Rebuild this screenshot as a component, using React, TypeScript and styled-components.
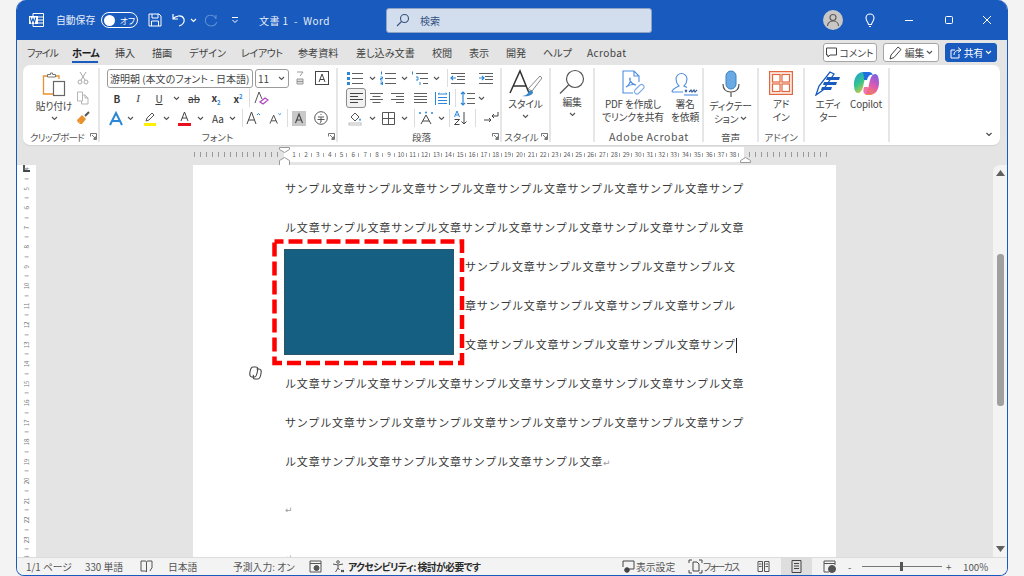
import React from "react";
import styled, { createGlobalStyle } from "styled-components";

const GlobalStyle = createGlobalStyle`
  html, body {
    margin: 0;
    height: 100%;
    overflow: hidden;
    background: #f3f3f3;
  }
  body {
    font-family: "Noto Sans CJK JP", "Noto Sans", "Liberation Sans", sans-serif;
    font-feature-settings: "palt";
  }
  * { box-sizing: border-box; }
`;

const GRAY = "#5f5f5f";
const BLUE = "#2b88d8";

const Page = styled.div`
  width: 1024px;
  height: 576px;
  display: flex;
  justify-content: center;
`;
const Win = styled.div`
  width: 992px;
  height: 576px;
  display: flex;
  flex-direction: column;
  background: #e4e4e4;
  border: 1px solid #185abd;
  border-top: 0;
  border-radius: 10px 10px 8px 8px;
  overflow: hidden;
`;

/* title bar */
const TitleBar = styled.div`
  height: 40px;
  flex-shrink: 0;
  display: flex;
  align-items: center;
  background: #185abd;
  color: #fff;
`;
const Slot = styled.div<{ $w: number; $ml?: number }>`
  width: ${(p) => p.$w}px;
  margin-left: ${(p) => p.$ml ?? 0}px;
  flex-shrink: 0;
  display: flex;
  align-items: center;
  justify-content: center;
  white-space: nowrap;
`;
const TitleText = styled(Slot)`
  font-size: 9.8px;
  color: #e6edf8;
  justify-content: flex-start;
`;
const DocTitle = styled(TitleText)`
  font-size: 10px;
  letter-spacing: 0.45px;
`;
const Toggle = styled.div`
  width: 37px;
  height: 16px;
  margin-left: 6px;
  border: 1px solid #fff;
  border-radius: 8px;
  display: flex;
  align-items: center;
  padding-left: 2px;
  font-size: 8.5px;
  white-space: nowrap;
  flex-shrink: 0;
  &::before {
    content: "";
    width: 11px;
    height: 11px;
    border-radius: 50%;
    background: #fff;
    margin-right: 5px;
    flex-shrink: 0;
  }
`;
const SearchBox = styled.div`
  width: 266px;
  height: 25px;
  margin-left: 56px;
  flex-shrink: 0;
  display: flex;
  align-items: center;
  gap: 10px;
  padding-left: 9px;
  background: #d2ddee;
  border: 1px solid #8fa3c4;
  border-radius: 3px;
  color: #33527f;
  font-size: 10px;
`;
const Avatar = styled.div`
  width: 20px;
  height: 20px;
  margin-left: 171px;
  border-radius: 50%;
  background: #c9c7c5;
  display: flex;
  align-items: center;
  justify-content: center;
  flex-shrink: 0;
`;

/* tabs */
const TabRow = styled.div`
  height: 25px;
  flex-shrink: 0;
  display: flex;
  align-items: center;
  padding: 0 10px;
  gap: 17px;
`;
const Tab = styled.div<{ $on?: boolean; $w: number; $ls: number }>`
  position: relative;
  width: ${(p) => p.$w}px;
  flex-shrink: 0;
  font-size: 10.1px;
  line-height: 14px;
  letter-spacing: ${(p) => p.$ls}px;
  white-space: nowrap;
  color: ${(p) => (p.$on ? "#1d1d1d" : "#424242")};
  font-weight: ${(p) => (p.$on ? 700 : 400)};
  &::after {
    content: "";
    display: ${(p) => (p.$on ? "block" : "none")};
    position: absolute;
    left: 0;
    right: 0;
    bottom: -3px;
    height: 2px;
    background: #185abd;
  }
`;
const TabActions = styled.div`
  margin-left: auto;
  display: flex;
  gap: 6px;
`;
const ActionButton = styled.div<{ $w: number; $primary?: boolean }>`
  width: ${(p) => p.$w}px;
  height: 19px;
  display: flex;
  align-items: center;
  justify-content: center;
  gap: 2px;
  font-size: 9.8px;
  border-radius: 3px;
  white-space: nowrap;
  background: ${(p) => (p.$primary ? "#185abd" : "#fff")};
  color: ${(p) => (p.$primary ? "#fff" : "#444")};
  border: 1px solid ${(p) => (p.$primary ? "#185abd" : "#a5a5a5")};
`;

/* ribbon */
const Ribbon = styled.div`
  height: 80px;
  width: 977px;
  margin-left: 6px;
  flex-shrink: 0;
  display: flex;
  padding: 3px 0 0 1px;
  background: #fff;
  border-radius: 7px;
  box-shadow: 0 1px 1px #d2d2d2;
`;
const Group = styled.div<{ $w: number; $pl?: number }>`
  width: ${(p) => p.$w}px;
  height: 74px;
  flex-shrink: 0;
  display: flex;
  flex-direction: column;
  border-right: 2px solid #e6e6e6;
  padding-left: ${(p) => p.$pl ?? 0}px;
`;
const GroupBody = styled.div`
  height: 63px;
  flex-shrink: 0;
  display: flex;
`;
const GroupFoot = styled.div<{ $pl?: number }>`
  height: 12px;
  flex-shrink: 0;
  display: flex;
  align-items: center;
  padding-left: ${(p) => p.$pl ?? 0}px;
`;
const GroupLabel = styled.div<{ $ls?: number }>`
  flex: 1;
  text-align: center;
  font-size: 9.6px;
  line-height: 12px;
  letter-spacing: ${(p) => p.$ls ?? 0}px;
  color: #555;
  white-space: nowrap;
`;
const LatinLabel = styled(GroupLabel)`
  font-size: 10.6px;
  letter-spacing: 0.55px;
`;
const Stack = styled.div`
  display: flex;
  flex-direction: column;
`;
const ToolRow = styled.div`
  height: 20px;
  display: flex;
  align-items: center;
`;
const Tool = styled(Slot)`
  height: 20px;
  font-size: 10px;
  color: #3a3a3a;
`;
const Selected = styled(Tool)`
  background: #f1f1f1;
  border: 1.5px solid #8b8b8b;
  border-radius: 3px;
`;
const Divider = styled.div<{ $ml?: number }>`
  width: 1px;
  height: 18px;
  margin-left: ${(p) => p.$ml ?? 0}px;
  margin-right: 1px;
  background: #dcdcdc;
  flex-shrink: 0;
`;
const FontBox = styled.div<{ $w: number; $ml?: number }>`
  width: ${(p) => p.$w}px;
  height: 19px;
  margin-left: ${(p) => p.$ml ?? 0}px;
  flex-shrink: 0;
  display: flex;
  align-items: center;
  justify-content: space-between;
  padding: 0 3px 0 2px;
  border: 1px solid #9b9b9b;
  border-radius: 3px;
  font-size: 10px;
  color: #444;
  white-space: nowrap;
`;
const SubBlue = styled.sub`
  color: ${BLUE};
  font-size: 6px;
`;
const SupBlue = styled.sup`
  color: ${BLUE};
  font-size: 6px;
`;
const SerifI = styled.i`
  font-family: "Liberation Serif", serif;
  font-size: 11px;
`;
const BigTool = styled.div<{ $w: number; $ml?: number }>`
  width: ${(p) => p.$w}px;
  margin-left: ${(p) => p.$ml ?? 0}px;
  flex-shrink: 0;
  display: flex;
  flex-direction: column;
  align-items: center;
`;
const BigIcon = styled.div<{ $h?: number }>`
  height: ${(p) => p.$h ?? 30}px;
  display: flex;
  align-items: center;
  justify-content: center;
`;
const BigText = styled.div`
  font-size: 9.8px;
  line-height: 12.5px;
  letter-spacing: -0.2px;
  color: #444;
  white-space: nowrap;
  display: flex;
  align-items: center;
  justify-content: center;
  gap: 2px;
  min-height: 12.5px;
`;
const Collapse = styled.div`
  margin-left: auto;
  align-self: flex-end;
  width: 22px;
  height: 20px;
  display: flex;
  align-items: center;
  justify-content: center;
  margin-bottom: 1px;
`;

/* rulers */
const RulerRow = styled.div`
  position: relative;
  height: 18px;
  margin-top: 2px;
  flex-shrink: 0;
  display: flex;
  align-items: flex-start;
`;
const RulerCorner = styled.div`
  width: 177px;
  height: 18px;
  padding: 6px 0 0 6px;
  flex-shrink: 0;
`;
const TickGroup = styled.div<{ $ml?: number }>`
  display: flex;
  margin-left: ${(p) => p.$ml ?? 0}px;
  height: 15px;
  align-items: center;
  flex-shrink: 0;
`;
const Tick = styled.div`
  width: 5.95px;
  &::before {
    content: "";
    display: block;
    width: 1px;
    height: 5px;
    background: #9a9a9a;
  }
`;
const RulerStrip = styled.div`
  width: 460px;
  height: 15px;
  margin-left: 1px;
  padding-left: 4px;
  background: #fff;
  display: flex;
  align-items: center;
  flex-shrink: 0;
`;
const RulerCell = styled.div`
  position: relative;
  width: 11.87px;
  flex-shrink: 0;
  text-align: center;
  font-size: 6.4px;
  line-height: 8px;
  color: #5a5a5a;
  letter-spacing: -0.2px;
  &::after {
    content: "";
    position: absolute;
    right: 0;
    top: 2px;
    width: 1px;
    height: 4px;
    background: #a5a5a5;
  }
`;
const Marker = styled.svg<{ $x: number; $y: number }>`
  position: absolute;
  left: ${(p) => p.$x}px;
  top: ${(p) => p.$y}px;
`;

/* document area */
const DocRow = styled.div`
  flex: 1;
  min-height: 0;
  display: flex;
  overflow: hidden;
`;
const VRuler = styled.div`
  width: 19px;
  flex-shrink: 0;
  background: #fff;
  overflow: hidden;
`;
const VCell = styled.div`
  height: 9.75px;
  display: flex;
  align-items: center;
  justify-content: center;
  font-size: 6.2px;
  line-height: 8px;
  color: #7a7a7a;
  transform: translateY(-1px) rotate(-90deg);
`;
const VTick = styled.div`
  width: 1px;
  height: 4px;
  background: #a0a0a0;
`;
const Canvas = styled.div`
  flex: 1;
  display: flex;
  padding-left: 157px;
  overflow: hidden;
`;
const Sheet = styled.div`
  position: relative;
  width: 643px;
  flex-shrink: 0;
  background: #fff;
  padding: 3.5px 0 0 92px;
`;
const TextLine = styled.div`
  height: 39px;
  line-height: 39px;
  font-size: 11px;
  letter-spacing: 0.83px;
  font-feature-settings: normal;
  color: #3b3b3b;
  white-space: nowrap;
`;
const EmptyPara = styled.div`
  height: 48.5px;
  line-height: 48.5px;
  font-size: 9px;
  color: #9a9a9a;
`;
const FirstEmptyPara = styled(EmptyPara)`
  margin-top: 5px;
`;
const Mark = styled.span`
  font-size: 9px;
  color: #9a9a9a;
  letter-spacing: 0;
  font-family: "DejaVu Sans", sans-serif;
`;
const Caret = styled.span`
  display: inline-block;
  width: 1px;
  height: 15px;
  background: #222;
  vertical-align: middle;
`;
const WrapRow = styled.div`
  display: flex;
`;
const ShapeSlot = styled.div`
  width: 180px;
  flex-shrink: 0;
  padding-top: 2px;
`;
const Shape = styled.div`
  width: 170px;
  height: 106px;
  margin-left: -1px;
  background: #156082;
  border: 1px solid #2e5566;
`;
const Annotation = styled.svg`
  position: absolute;
  left: 79px;
  top: 74px;
`;
const CopilotHint = styled.svg`
  position: absolute;
  left: 56px;
  top: 201px;
`;
const ScrollBar = styled.div`
  width: 14px;
  flex-shrink: 0;
  display: flex;
  flex-direction: column;
  align-items: center;
  background: #f3f3f3;
  border-radius: 7px 0 0 0;
  padding-top: 5px;
  padding-bottom: 5px;
`;
const ScrollThumb = styled.div`
  width: 7px;
  height: 152px;
  margin-top: 78px;
  background: #a0a0a0;
  border-radius: 3px;
`;
const ScrollDown = styled.div`
  margin-top: auto;
  display: flex;
`;

/* status bar */
const StatusBar = styled.div`
  height: 18px;
  flex-shrink: 0;
  display: flex;
  align-items: center;
  background: #f3f3f3;
  border-top: 1px solid #dcdcdc;
  font-size: 9.8px;
  color: #555;
`;
const StatusText = styled(Slot)<{ $strong?: boolean; $ls?: number }>`
  justify-content: flex-start;
  color: ${(p) => (p.$strong ? "#2a2a2a" : "#555")};
  font-weight: ${(p) => (p.$strong ? 700 : 400)};
  letter-spacing: ${(p) => p.$ls ?? 0}px;
  height: 17px;
`;
const StatusIcon = styled(Slot)<{ $on?: boolean }>`
  height: 17px;
  background: ${(p) => (p.$on ? "#dedede" : "transparent")};
`;
const Zoom = styled.div`
  position: relative;
  width: 80px;
  height: 1px;
  margin-left: 8px;
  background: #777;
  flex-shrink: 0;
  &::after {
    content: "";
    position: absolute;
    left: 38px;
    top: -4px;
    width: 3px;
    height: 9px;
    background: #555;
  }
`;

/* icons */
type IcProps = { s?: number; h?: number; children: React.ReactNode; stroke?: string };
const Ic = ({ s = 16, h, children, stroke = GRAY }: IcProps) => (
  <svg width={s} height={h ?? s} viewBox={`0 0 ${s} ${h ?? s}`} fill="none" stroke={stroke} strokeWidth="1">
    {children}
  </svg>
);
const Chev = ({ c = "#555", s = 7 }: { c?: string; s?: number }) => (
  <svg width={s} height="5" viewBox="0 0 7 5" fill="none" stroke={c} strokeWidth="1.1">
    <path d="M1 1l2.5 2.5L6 1" />
  </svg>
);
const LauncherSvg = styled.svg`
  flex-shrink: 0;
`;
const Launcher = () => (
  <LauncherSvg width="8" height="8" viewBox="0 0 8 8" fill="none" stroke="#666" strokeWidth="0.9">
    <path d="M.5 3.5v-3h6v6h-3M2 2l3.5 3.5M5.5 3.5v2h-2" />
  </LauncherSvg>
);
const Bullets = () => (
  <Ic s={18} h={14}>
    <g fill={BLUE} stroke="none">
      <rect x="1" y="1" width="3" height="3" />
      <rect x="1" y="6" width="3" height="3" />
      <rect x="1" y="11" width="3" height="3" />
    </g>
    <path d="M6 2.5h11M6 7.5h11M6 12.5h11" />
  </Ic>
);
const Numbered = () => (
  <Ic s={18} h={14}>
    <path d="M2.5 0.5v3M1.5 6h2v1.5h-2V9h2M1.5 11h2v3h-2M1.5 12.5h2" stroke={BLUE} />
    <path d="M6 2.5h11M6 7.5h11M6 12.5h11" />
  </Ic>
);
const Multi = () => (
  <Ic s={18} h={14}>
    <path d="M1.5 .5v3M5 6h2v3H5M9 11h0v3" stroke={BLUE} />
    <path d="M5 2.5h12M9 7.5h8M12 12.5h5" />
  </Ic>
);
const IndentIc = ({ inc }: { inc?: boolean }) => (
  <Ic s={16} h={13}>
    <path d="M1 1.5h14M7 4.5h8M7 7.5h8M1 11.5h14" />
    <path d={inc ? "M1 6h5M4 4l2 2-2 2" : "M6 6H1M3 4L1 6l2 2"} stroke={BLUE} strokeWidth="1.2" />
  </Ic>
);
const Align = ({ mode }: { mode: "l" | "c" | "r" | "j" }) => {
  const long = 13;
  const short = mode === "j" ? 13 : 8;
  const x = mode === "c" ? 3.5 : mode === "r" ? 6 : 1;
  return (
    <Ic s={15} h={13}>
      <path d={`M1 1.5h${long}M${x} 4.5h${short}M1 7.5h${long}M${x} 10.5h${short}`} stroke={mode === "l" ? "#444" : GRAY} />
    </Ic>
  );
};

const WordLogo = () => (
  <svg width="17" height="16" viewBox="0 0 17 16" fill="none" stroke="#fff">
    <path d="M5 1.5h10.5v13H5z" />
    <path d="M10 5h5M10 8h5M10 11h5" />
    <rect x="1" y="4" width="9" height="8" fill="#fff" stroke="none" />
    <path d="M2.3 5.5l1.2 5 1.5-4 1.5 4 1.2-5" stroke="#185abd" strokeWidth="1.1" />
  </svg>
);
const Save = () => (
  <Ic s={14} stroke="#fff">
    <path d="M1 1h10l2 2v10H1zM4 1v4h6V1M3.5 13V8h7v5" />
  </Ic>
);
const Undo = ({ c = "#fff" }: { c?: string }) => (
  <svg width="16" height="16" viewBox="0 0 16 16" fill="none" stroke={c} strokeWidth="1.2">
    <path d="M2 2v5h5M2 7c2-3 9-5 11 0 1 4-2 6-5 7" />
  </svg>
);
const Redo = () => (
  <svg width="16" height="16" viewBox="0 0 16 16" fill="none" stroke="#5e8ed4" strokeWidth="1.1">
    <path d="M13 3v4M13 7C11 2 4 2 2.5 7c-1 4 2 7 6 7 3 0 5-2 5-4" />
  </svg>
);
const Customize = () => (
  <svg width="8" height="8" viewBox="0 0 8 8" fill="none" stroke="#fff">
    <path d="M1 1.5h6M1.5 4L4 6.5 6.5 4" />
  </svg>
);
const SearchIc = () => (
  <svg width="14" height="14" viewBox="0 0 14 14" fill="none" stroke="#33527f" strokeWidth="1.1">
    <circle cx="8.5" cy="5.5" r="4" />
    <path d="M5.5 8.5L1 13" />
  </svg>
);
const Bulb = () => (
  <svg width="16" height="16" viewBox="0 0 16 16" fill="none" stroke="#fff" strokeWidth="1.1">
    <path d="M6.5 12.5c0-2-2.5-3.5-2.5-6.5a4 4 0 0 1 8 0c0 3-2.5 4.5-2.5 6.5zM7 14.5h2" />
  </svg>
);
const Person = () => (
  <svg width="14" height="14" viewBox="0 0 14 14" fill="none" stroke="#5a5a5a" strokeWidth="1.1">
    <circle cx="7" cy="4.5" r="3" />
    <path d="M1.5 13c0-3 2.5-5 5.5-5s5.5 2 5.5 5" />
  </svg>
);
const Paste = () => (
  <svg width="24" height="25" viewBox="0 0 24 25" fill="none">
    <path d="M5 4H1.5v18H11" stroke="#e8912d" strokeWidth="1.3" />
    <path d="M14 4h3v3" stroke="#e8912d" strokeWidth="1.3" />
    <path d="M5.5 5V2.5h3V1h2v1.5h3V5z" stroke="#777" fill="#fff" />
    <rect x="11.5" y="9.5" width="11" height="14" stroke="#666" fill="#fff" strokeWidth="1.2" />
  </svg>
);
const Cut = () => (
  <Ic s={14} stroke="#a8a8a8">
    <path d="M4 1l5 8M10 1L5 9" />
    <circle cx="4" cy="11" r="2" />
    <circle cx="10" cy="11" r="2" />
  </Ic>
);
const Copy = () => (
  <Ic s={14} stroke="#b5b5b5">
    <path d="M1.5 1h5v9h-5zM6 4h3l3 3v6H5.5v-3M9 4v3h3" />
  </Ic>
);
const Painter = () => (
  <svg width="15" height="14" viewBox="0 0 15 14" fill="none">
    <path d="M1 9l5-5 4 4-4 5H3l1-2-2 1z" fill="#e8912d" />
    <path d="M9 5l4-4" stroke="#555" strokeWidth="2" />
  </svg>
);
const ABox = () => (
  <svg width="14" height="14" viewBox="0 0 14 14" fill="none" stroke="#444">
    <rect x=".5" y=".5" width="13" height="13" />
    <path d="M4 11l3-8 3 8M5 8.5h4" />
  </svg>
);
const Ruby = () => (
  <svg width="10" height="15" viewBox="0 0 10 15" fill="none" stroke="#999">
    <path d="M2 1h6L5 5" />
    <path d="M2 8h6v5H2zM2 10.5h6" fill="#ddd" />
  </svg>
);
const FontAEffect = () => (
  <svg width="16" height="15" viewBox="0 0 16 15" fill="none" stroke={BLUE} strokeWidth="2">
    <path d="M2 14L8 2l6 12M4.5 10h7" />
  </svg>
);
const Eraser = () => (
  <svg width="15" height="14" viewBox="0 0 15 14" fill="none">
    <path d="M1 12L5 1l3 7" stroke="#555" />
    <path d="M6 11l5-4 3 2-5 4z" stroke="#b146c2" strokeWidth="1.3" />
  </svg>
);
const HighlightPen = () => (
  <svg width="14" height="15" viewBox="0 0 14 15" fill="none">
    <path d="M3 10l1-3 5-5 2 2-5 5z" stroke="#555" />
    <rect x="1" y="12" width="12" height="3" fill="#ffef00" />
  </svg>
);
const FontColor = () => (
  <svg width="13" height="15" viewBox="0 0 13 15" fill="none">
    <path d="M3 10l3.5-9L10 10M4 7h5" stroke="#444" />
    <rect y="12" width="13" height="3" fill="#e8101c" />
  </svg>
);
const GrowA = ({ down }: { down?: boolean }) => (
  <svg width={down ? 14 : 15} height="14" viewBox="0 0 15 14" fill="none">
    <path d={down ? "M1 13L5 4l4 9M2.5 10h5" : "M1 13L5.5 1 10 13M2.5 9h6"} stroke="#444" />
    <path d={down ? "M10 2l1.5 1.5L13 2" : "M11 4l1.5-1.5L14 4"} stroke={BLUE} />
  </svg>
);
const ShadeA = () => (
  <svg width="14" height="15" viewBox="0 0 14 15">
    <rect width="14" height="15" fill="#c9c9c9" />
    <path d="M3.5 12L7 3l3.5 9M4.8 9h4.4" fill="none" stroke="#444" strokeWidth="1.1" />
  </svg>
);
const Enclosed = () => (
  <svg width="14" height="14" viewBox="0 0 14 14" fill="none" stroke="#555">
    <circle cx="7" cy="7" r="6.3" />
    <path d="M4 6h6M7 3v1M3.5 8.5h7M7 6.5v4.5l-1 .5" />
  </svg>
);
const Distribute = () => (
  <Ic s={15} h={15} stroke={BLUE}>
    <path d="M.5 1v13M14.5 1v13M3 3h9M3 3l1.5-1M12 3l-1.5-1" />
    <path d="M3 6.5h9M3 9.5h9M3 12.5h9" />
  </Ic>
);
const LineSpacing = () => (
  <Ic s={15} h={15}>
    <path d="M3 1v13M1 3l2-2 2 2M1 12l2 2 2-2" stroke={BLUE} strokeWidth="1.2" />
    <path d="M7 2.5h8M7 7.5h8M7 12.5h8" />
  </Ic>
);
const Bucket = () => (
  <svg width="15" height="15" viewBox="0 0 15 15" fill="none">
    <path d="M3 6l4-4 4 4-4 4z" stroke="#555" />
    <path d="M12 7l1 2-1 1-1-1z" fill={BLUE} />
    <rect x="1" y="12" width="12" height="2" stroke="#bbb" fill="#fff" />
  </svg>
);
const GridIc = () => (
  <Ic s={13} stroke="#555">
    <path d="M.5.5h12v12H.5zM6.5.5v12M.5 6.5h12" />
  </Ic>
);
const Asian = () => (
  <svg width="16" height="14" viewBox="0 0 16 14" fill="none">
    <path d="M3 13L8 4l5 9M5 10h6" stroke="#444" />
    <g fill={BLUE}>
      <circle cx="2" cy="2" r="1" />
      <circle cx="8" cy="1.5" r="1" />
      <circle cx="14" cy="2" r="1" />
    </g>
  </svg>
);
const Sort = () => (
  <svg width="16" height="16" viewBox="0 0 16 16" fill="none">
    <path d="M1.5 7L4 1l2.5 6M2.5 5h3" stroke={BLUE} />
    <path d="M1.5 9.5h5l-5 5h5" stroke="#444" />
    <path d="M11 2v12M8.5 11.5L11 14l2.5-2.5" stroke="#444" />
  </svg>
);
const ParaMark = () => (
  <svg width="16" height="14" viewBox="0 0 16 14" fill="none" stroke="#444">
    <path d="M1 9h7M6 7l2 2-2 2" />
    <path d="M15 1v4H9M11 3L9 5l2 2" />
  </svg>
);
const StyleIc = () => (
  <svg width="36" height="30" viewBox="0 0 36 30" fill="none">
    <path d="M2 25L12 3l9 22M5.5 18h13" stroke="#333" strokeWidth="1.5" />
    <path d="M20 21L32 8l2 2-10 13z" stroke="#888" fill="#fff" />
    <path d="M14 28c2 0 5-1 6-3 1-3 4-3 5-1 0 3-5 5-11 4z" fill="#3a87c8" />
  </svg>
);
const BigSearch = () => (
  <svg width="26" height="26" viewBox="0 0 26 26" fill="none" stroke="#555" strokeWidth="1.2">
    <circle cx="16" cy="10" r="8.5" />
    <path d="M9.5 16L1 24.5" />
  </svg>
);
const PdfIc = () => (
  <svg width="24" height="26" viewBox="0 0 24 26" fill="none" stroke="#4e8fe0" strokeWidth="1.1">
    <path d="M12 23H2V1h11l5 5v6M13 1v5h5" />
    <path d="M5 17c3-1 5-6 4-9-1 0 0 6 6 7-3-1-7 0-10 2z" />
    <path d="M14 20l5-5a2.5 2.5 0 0 1 3.5 3.5l-5 5a2.5 2.5 0 0 1-3.5-3.5z" stroke="#7aa9e8" />
  </svg>
);
const SignIc = () => (
  <svg width="28" height="25" viewBox="0 0 28 25" fill="none" stroke="#4e8fe0" strokeWidth="1.1">
    <path d="M1 21c0-3 3-4 7-6-2-2-3-4-3-7a5.5 5.5 0 0 1 11 0c0 3-1 5-3 7 1 .5 2 1 3 1.5M1 21h11" />
    <path d="M14 19l2 2M16 19l-2 2M18 21l2-2 1 2 2-2 1 2 2-2" stroke="#335c9c" />
    <path d="M13 24h14" />
  </svg>
);
const Mic = () => (
  <svg width="20" height="28" viewBox="0 0 20 28" fill="none">
    <rect x="5" y="1" width="10" height="18" rx="5" fill="#6aaae4" stroke="#3d7fbf" />
    <path d="M2 14c0 5 3 8 8 8s8-3 8-8M10 22v5" stroke="#555" strokeWidth="1.2" />
  </svg>
);
const AddinIc = () => (
  <svg width="24" height="24" viewBox="0 0 24 24" fill="none" stroke="#e2693f" strokeWidth="1.2">
    <rect x=".6" y=".6" width="22.8" height="22.8" fill="#fdeee8" />
    <rect x="3.5" y="3.5" width="7.5" height="7.5" fill="#fff" />
    <rect x="13" y="3.5" width="7.5" height="7.5" fill="#fff" />
    <rect x="3.5" y="13" width="7.5" height="7.5" fill="#fff" />
    <rect x="13" y="13" width="7.5" height="7.5" fill="#fff" />
  </svg>
);
const EditorIc = () => (
  <svg width="26" height="26" viewBox="0 0 26 26" fill="none">
    <path d="M1 25l3-9L15 2l4 2L8 20z" stroke="#185abd" strokeWidth="1.3" fill="#fff" />
    <path d="M12 7h13l-1 3H11zM9 12h13l-1 3H8zM7 17h10l-1 3H6z" fill="#185abd" />
  </svg>
);
const CopilotIc = () => (
  <svg width="25" height="25" viewBox="0 0 25 25">
    <defs>
      <linearGradient id="cpA" x1="0" y1="0" x2="0.6" y2="1">
        <stop offset="0" stopColor="#1c9be0" />
        <stop offset="0.55" stopColor="#37c48d" />
        <stop offset="1" stopColor="#e8c93a" />
      </linearGradient>
      <linearGradient id="cpB" x1="0.8" y1="0" x2="0.3" y2="1">
        <stop offset="0" stopColor="#7a5ee6" />
        <stop offset="0.55" stopColor="#e05bb0" />
        <stop offset="1" stopColor="#f58a42" />
      </linearGradient>
    </defs>
    <path d="M9 1h6c-2 0-3 2-4 6l-2 9c-1 4-3 6-5 6-3 0-4-4-4-9C0 6 4 1 9 1z" fill="url(#cpA)" />
    <path d="M16 24h-6c2 0 3-2 4-6l2-9c1-4 3-6 5-6 3 0 4 4 4 9 0 7-4 12-9 12z" fill="url(#cpB)" />
    <path d="M9 1h6c2 0 3 1 4 3-3-1-5 1-6 5h-3C10 5 9 2 9 1z" fill="#1f6fe0" />
    <path d="M10 16h4c1 4 2 7 4 7h-7c-2-1-2-4-1-7z" fill="#ec5d9c" opacity="0.85" />
  </svg>
);
const CopilotGhost = () => (
  <g fill="none" stroke="#444" strokeWidth="1.1">
    <path d="M4 1h3c2 0 2 2 1.5 4-.5 3-1 6-3 6H3C1 11 .5 9 1 6c.5-3 1-5 3-5z" />
    <path d="M7.5 3H10c2 0 2.5 2 2 4.5-.5 3-1 5.5-3 5.5H6c-2 0-2-2-1.5-4" />
  </g>
);
const Comment = () => (
  <svg width="11" height="11" viewBox="0 0 11 11" fill="none" stroke="#444">
    <path d="M.5 1h10v7H4L2 10V8H.5z" />
  </svg>
);
const Pencil = () => (
  <svg width="14" height="14" viewBox="0 0 14 14" fill="none" stroke="#444">
    <path d="M1 13l1-4 7-8 3 2.5-7 8z" />
  </svg>
);
const ShareIc = () => (
  <svg width="12" height="12" viewBox="0 0 12 12" fill="none" stroke="#fff">
    <path d="M5 3H1v8h8V7M4 8c0-3 2-5 7-5M8 .5L11 3 8 5.5" />
  </svg>
);
const BookIc = () => (
  <Ic s={13} stroke="#555">
    <path d="M1 1h4c1 0 1.5 .5 1.5 1.5V12C6 11 5 11 4 11H1zM12 1H8c-1 0-1.5 .5-1.5 1.5M10 11l1-2 1-1V1" />
  </Ic>
);
const MacroIc = () => (
  <Ic s={13} stroke="#555">
    <path d="M1 1h11v11H1zM1 3.5h11" />
    <circle cx="7.5" cy="8" r="2.5" fill="#555" />
  </Ic>
);
const AccessIc = () => (
  <svg width="13" height="13" viewBox="0 0 13 13" fill="none" stroke="#555">
    <circle cx="6" cy="2" r="1.3" />
    <path d="M1 4l5 1 5-1M6 5v3M3.5 12L6 8l1.5 2" />
    <path d="M9 10l3 2M12 10l-3 2" stroke="#333" />
  </svg>
);
const DisplayIc = () => (
  <Ic s={13} stroke="#444">
    <path d="M1 1h11v8H6" />
    <path d="M1 1v6" />
    <circle cx="5" cy="10" r="2.3" fill="#444" />
  </Ic>
);
const FocusIc = () => (
  <Ic s={15} stroke="#444">
    <path d="M1 4V1h3M11 1h3v3M1 11v3h3M11 14h3v-3" />
    <path d="M5 3h4l2 2v7H5z" />
  </Ic>
);
const ReadIc = () => (
  <Ic s={13} stroke="#555">
    <path d="M1 1.5h4.5v10H1zM7.5 1.5H12v10H7.5zM2 4h2.5M2 6.5h2.5M8.500 4H11M8.500 6.5H11" />
  </Ic>
);
const PrintIc = () => (
  <Ic s={13} stroke="#444">
    <path d="M2 .5h9v12H2zM4 3.5h5M4 6h5M4 8.5h5" />
  </Ic>
);
const WebIc = () => (
  <Ic s={13} stroke="#555">
    <path d="M1 1h11v4M1 1v11h5M1 3.5h11" />
    <circle cx="9" cy="9" r="3.5" fill="#555" />
  </Ic>
);

const TABS = [
  { label: "ファイル", w: 28, ls: -1 },
  { label: "ホーム", w: 26, ls: -0.5 },
  { label: "挿入", w: 20, ls: 0 },
  { label: "描画", w: 20, ls: 0 },
  { label: "デザイン", w: 35, ls: 0 },
  { label: "レイアウト", w: 40, ls: -0.5 },
  { label: "参考資料", w: 41, ls: 0 },
  { label: "差し込み文書", w: 59, ls: 0 },
  { label: "校閲", w: 20, ls: 0 },
  { label: "表示", w: 20, ls: 0 },
  { label: "開発", w: 20, ls: 0 },
  { label: "ヘルプ", w: 27, ls: 0 },
  { label: "Acrobat", w: 40, ls: 0.4 },
];
const UNIT = "サンプル文章";
const FULL_A = UNIT.repeat(6) + "サンプ";
const FULL_B = "ル文章" + UNIT.repeat(6);
const WRAPPED = [
  "サンプル文章サンプル文章サンプル文章サンプル文",
  "章サンプル文章サンプル文章サンプル文章サンプル",
  "文章サンプル文章サンプル文章サンプル文章サンプ",
];
const rulerNumbers = Array.from({ length: 38 }, (_, i) => i + 1);
const leftTicks = Array.from({ length: 15 }, (_, i) => i);
const rightTicks = Array.from({ length: 14 }, (_, i) => i);
const vNumbers = Array.from({ length: 21 }, (_, i) => i + 4);

export default function App() {
  return (
    <Page>
      <GlobalStyle />
      <Win>
        <TitleBar>
          <Slot $w={17} $ml={11}><WordLogo /></Slot>
          <TitleText $w={39} $ml={11}>自動保存</TitleText>
          <Toggle>オフ</Toggle>
          <Slot $w={14} $ml={10}><Save /></Slot>
          <Slot $w={16} $ml={9}><Undo /></Slot>
          <Slot $w={8} $ml={2}><Chev c="#fff" /></Slot>
          <Slot $w={16} $ml={6}><Redo /></Slot>
          <Slot $w={8} $ml={12}><Customize /></Slot>
          <DocTitle $w={71} $ml={20}>文書 1&nbsp; -&nbsp; Word</DocTitle>
          <SearchBox><SearchIc />検索</SearchBox>
          <Avatar><Person /></Avatar>
          <Slot $w={16} $ml={19}><Bulb /></Slot>
          <Slot $w={10} $ml={26}>
            <svg width="10" height="10" viewBox="0 0 10 10" stroke="#fff"><path d="M1 5.5h8" /></svg>
          </Slot>
          <Slot $w={10} $ml={30}>
            <svg width="10" height="10" viewBox="0 0 10 10" fill="none" stroke="#fff"><rect x="1.5" y="1.5" width="7" height="7" rx="1" /></svg>
          </Slot>
          <Slot $w={10} $ml={28}>
            <svg width="10" height="10" viewBox="0 0 10 10" stroke="#fff"><path d="M1 1l8 8M9 1l-8 8" /></svg>
          </Slot>
        </TitleBar>

        <TabRow>
          {TABS.map((t) => (
            <Tab key={t.label} $on={t.label === "ホーム"} $w={t.w} $ls={t.ls}>{t.label}</Tab>
          ))}
          <TabActions>
            <ActionButton $w={54}><Comment />コメント</ActionButton>
            <ActionButton $w={56}><Pencil />編集 <Chev /></ActionButton>
            <ActionButton $w={52} $primary><ShareIc />共有 <Chev c="#fff" /></ActionButton>
          </TabActions>
        </TabRow>

        <Ribbon>
          <Group $w={76}>
            <GroupBody>
              <BigTool $w={40} $ml={10}>
                <BigIcon $h={32}><Paste /></BigIcon>
                <BigText>貼り付け</BigText>
                <BigText><Chev /></BigText>
              </BigTool>
              <Stack>
                <Tool $w={18}><Cut /></Tool>
                <Tool $w={18}><Copy /></Tool>
                <Tool $w={18}><Painter /></Tool>
              </Stack>
            </GroupBody>
            <GroupFoot><GroupLabel $ls={-0.7}>クリップボード</GroupLabel><Launcher /></GroupFoot>
          </Group>

          <Group $w={238} $pl={7}>
            <GroupBody>
              <Stack>
                <ToolRow>
                  <FontBox $w={146}>游明朝 (本文のフォント - 日本語)<Chev /></FontBox>
                  <FontBox $w={34} $ml={2}>11<Chev /></FontBox>
                  <Tool $w={22}><Ruby /></Tool>
                  <Tool $w={22}><ABox /></Tool>
                </ToolRow>
                <ToolRow>
                  <Tool $w={20}><b>B</b></Tool>
                  <Tool $w={22}><SerifI>I</SerifI></Tool>
                  <Tool $w={20}><u>U</u></Tool>
                  <Tool $w={14}><Chev /></Tool>
                  <Tool $w={22}><s>ab</s></Tool>
                  <Tool $w={22}><b>x<SubBlue>2</SubBlue></b></Tool>
                  <Tool $w={22}><b>x<SupBlue>2</SupBlue></b></Tool>
                  <Divider />
                  <Tool $w={20}><Eraser /></Tool>
                </ToolRow>
                <ToolRow>
                  <Tool $w={18}><FontAEffect /></Tool>
                  <Tool $w={10}><Chev /></Tool>
                  <Tool $w={24} $ml={3}><HighlightPen /></Tool>
                  <Tool $w={8}><Chev /></Tool>
                  <Tool $w={24} $ml={2}><FontColor /></Tool>
                  <Tool $w={8}><Chev /></Tool>
                  <Tool $w={20} $ml={4}>Aa</Tool>
                  <Tool $w={8}><Chev /></Tool>
                  <Divider $ml={6} />
                  <Tool $w={18}><GrowA /></Tool>
                  <Tool $w={20} $ml={4}><GrowA down /></Tool>
                  <Divider $ml={1} />
                  <Tool $w={20}><ShadeA /></Tool>
                  <Tool $w={22} $ml={1}><Enclosed /></Tool>
                </ToolRow>
              </Stack>
            </GroupBody>
            <GroupFoot><GroupLabel>フォント</GroupLabel><Launcher /></GroupFoot>
          </Group>

          <Group $w={164} $pl={7}>
            <GroupBody>
              <Stack>
                <ToolRow>
                  <Tool $w={20}><Bullets /></Tool>
                  <Tool $w={14}><Chev /></Tool>
                  <Tool $w={18}><Numbered /></Tool>
                  <Tool $w={14}><Chev /></Tool>
                  <Tool $w={18}><Multi /></Tool>
                  <Tool $w={14}><Chev /></Tool>
                  <Divider $ml={4} />
                  <Tool $w={18}><IndentIc /></Tool>
                  <Tool $w={20} $ml={9}><IndentIc inc /></Tool>
                </ToolRow>
                <ToolRow>
                  <Selected $w={20} $ml={1}><Align mode="l" /></Selected>
                  <Tool $w={20}><Align mode="c" /></Tool>
                  <Tool $w={20} $ml={1}><Align mode="r" /></Tool>
                  <Tool $w={20} $ml={3}><Align mode="j" /></Tool>
                  <Tool $w={20} $ml={2}><Distribute /></Tool>
                  <Divider $ml={3} />
                  <Tool $w={20}><LineSpacing /></Tool>
                  <Tool $w={8}><Chev /></Tool>
                </ToolRow>
                <ToolRow>
                  <Tool $w={20}><Bucket /></Tool>
                  <Tool $w={14}><Chev /></Tool>
                  <Tool $w={18}><GridIc /></Tool>
                  <Tool $w={14}><Chev /></Tool>
                  <Divider $ml={3} />
                  <Tool $w={20}><Asian /></Tool>
                  <Tool $w={10}><Chev /></Tool>
                  <Divider $ml={3} />
                  <Tool $w={20}><Sort /></Tool>
                  <Divider $ml={4} />
                  <Tool $w={20} $ml={4}><ParaMark /></Tool>
                </ToolRow>
              </Stack>
            </GroupBody>
            <GroupFoot $pl={6}><GroupLabel>段落</GroupLabel><Launcher /></GroupFoot>
          </Group>

          <Group $w={49}>
            <GroupBody>
              <BigTool $w={47}>
                <BigIcon><StyleIc /></BigIcon>
                <BigText>スタイル</BigText>
                <BigText><Chev /></BigText>
              </BigTool>
            </GroupBody>
            <GroupFoot><GroupLabel>スタイル</GroupLabel><Launcher /></GroupFoot>
          </Group>

          <Group $w={44}>
            <GroupBody>
              <BigTool $w={42}>
                <BigIcon $h={28}><BigSearch /></BigIcon>
                <BigText>編集</BigText>
                <BigText><Chev /></BigText>
              </BigTool>
            </GroupBody>
            <GroupFoot />
          </Group>

          <Group $w={109} $pl={1}>
            <GroupBody>
              <BigTool $w={74}>
                <BigIcon><PdfIc /></BigIcon>
                <BigText>PDF を作成し</BigText>
                <BigText>でリンクを共有</BigText>
              </BigTool>
              <BigTool $w={30}>
                <BigIcon><SignIc /></BigIcon>
                <BigText>署名</BigText>
                <BigText>を依頼</BigText>
              </BigTool>
            </GroupBody>
            <GroupFoot><LatinLabel>Adobe Acrobat</LatinLabel></GroupFoot>
          </Group>

          <Group $w={55}>
            <GroupBody>
              <BigTool $w={53}>
                <BigIcon $h={32}><Mic /></BigIcon>
                <BigText>ディクテー</BigText>
                <BigText>ション <Chev /></BigText>
              </BigTool>
            </GroupBody>
            <GroupFoot><GroupLabel>音声</GroupLabel></GroupFoot>
          </Group>

          <Group $w={46}>
            <GroupBody>
              <BigTool $w={44}>
                <BigIcon><AddinIc /></BigIcon>
                <BigText>アド</BigText>
                <BigText>イン</BigText>
              </BigTool>
            </GroupBody>
            <GroupFoot><GroupLabel>アドイン</GroupLabel></GroupFoot>
          </Group>

          <Group $w={85}>
            <GroupBody>
              <BigTool $w={38} $ml={4}>
                <BigIcon><EditorIc /></BigIcon>
                <BigText>エディ</BigText>
                <BigText>ター</BigText>
              </BigTool>
              <BigTool $w={38}>
                <BigIcon><CopilotIc /></BigIcon>
                <BigText>Copilot</BigText>
              </BigTool>
            </GroupBody>
            <GroupFoot />
          </Group>

          <Collapse><Chev c="#444" s={10} /></Collapse>
        </Ribbon>

        <RulerRow>
          <RulerCorner>
            <svg width="7" height="7" viewBox="0 0 7 7"><path d="M1 0v6h6" fill="none" stroke="#444" strokeWidth="1.8" /></svg>
          </RulerCorner>
          <TickGroup>{leftTicks.map((i) => <Tick key={i} />)}</TickGroup>
          <RulerStrip>
            {rulerNumbers.map((n) => <RulerCell key={n}>{n}</RulerCell>)}
          </RulerStrip>
          <TickGroup $ml={5}>{rightTicks.map((i) => <Tick key={i} />)}</TickGroup>
          <Marker $x={262} $y={0} width="11" height="6" viewBox="0 0 11 6">
            <path d="M.5.5h10v2l-5 3-5-3z" fill="#fff" stroke="#999" />
          </Marker>
          <Marker $x={262} $y={10} width="11" height="9" viewBox="0 0 11 9">
            <path d="M5.5.5l5 3v5H.5v-5z" fill="#fff" stroke="#999" />
          </Marker>
          <Marker $x={723} $y={10} width="11" height="6" viewBox="0 0 11 6">
            <path d="M5.5.5l5 3v2H.5v-2z" fill="#fff" stroke="#999" />
          </Marker>
        </RulerRow>

        <DocRow>
          <VRuler>
            {vNumbers.map((n) => (
              <React.Fragment key={n}>
                <VCell>{n}</VCell>
                <VCell><VTick /></VCell>
              </React.Fragment>
            ))}
          </VRuler>
          <Canvas>
            <Sheet>
              <TextLine>{FULL_A}</TextLine>
              <TextLine>{FULL_B}</TextLine>
              <WrapRow>
                <ShapeSlot><Shape /></ShapeSlot>
                <div>
                  <TextLine>{WRAPPED[0]}</TextLine>
                  <TextLine>{WRAPPED[1]}</TextLine>
                  <TextLine>{WRAPPED[2]}<Caret /></TextLine>
                </div>
              </WrapRow>
              <TextLine>{FULL_B}</TextLine>
              <TextLine>{FULL_A}</TextLine>
              <TextLine>ル文章{UNIT.repeat(4)}<Mark>↵</Mark></TextLine>
              <FirstEmptyPara><Mark>↵</Mark></FirstEmptyPara>
              <EmptyPara><Mark>↵</Mark></EmptyPara>
              <Annotation width="195" height="128" viewBox="0 0 195 128" fill="none">
                <rect x="2.5" y="2.5" width="187.5" height="121.5" stroke="#ff0000" strokeWidth="4.5" strokeDasharray="14 5" strokeDashoffset="5" />
              </Annotation>
              <CopilotHint width="14" height="14" viewBox="0 0 14 14"><CopilotGhost /></CopilotHint>
            </Sheet>
          </Canvas>
          <ScrollBar>
            <svg width="9" height="6" viewBox="0 0 9 6"><path d="M4.5 0L9 6H0z" fill="#606060" /></svg>
            <ScrollThumb />
            <ScrollDown>
              <svg width="9" height="6" viewBox="0 0 9 6"><path d="M0 0h9L4.5 6z" fill="#606060" /></svg>
            </ScrollDown>
          </ScrollBar>
        </DocRow>

        <StatusBar>
          <StatusText $w={43} $ml={9}>1/1 ページ</StatusText>
          <StatusText $w={40} $ml={16}>330 単語</StatusText>
          <StatusIcon $w={13} $ml={15}><BookIc /></StatusIcon>
          <StatusText $w={28} $ml={15}>日本語</StatusText>
          <StatusText $w={62} $ml={37}>予測入力: オン</StatusText>
          <StatusIcon $w={13} $ml={14}><MacroIc /></StatusIcon>
          <StatusIcon $w={13} $ml={10}><AccessIc /></StatusIcon>
          <StatusText $w={133} $ml={3} $strong $ls={-0.55}>アクセシビリティ: 検討が必要です</StatusText>
          <StatusIcon $w={13} $ml={141}><DisplayIc /></StatusIcon>
          <StatusText $w={38} $ml={1}>表示設定</StatusText>
          <StatusIcon $w={15} $ml={14}><FocusIc /></StatusIcon>
          <StatusText $w={35} $ls={-1.6}>フォーカス</StatusText>
          <StatusIcon $w={13} $ml={19}><ReadIc /></StatusIcon>
          <StatusIcon $w={31} $ml={11} $on><PrintIc /></StatusIcon>
          <StatusIcon $w={13} $ml={11}><WebIc /></StatusIcon>
          <StatusText $w={6} $ml={12}>-</StatusText>
          <Zoom />
          <StatusText $w={8} $ml={4}>+</StatusText>
          <StatusText $w={28} $ml={9}>100%</StatusText>
        </StatusBar>
      </Win>
    </Page>
  );
}
